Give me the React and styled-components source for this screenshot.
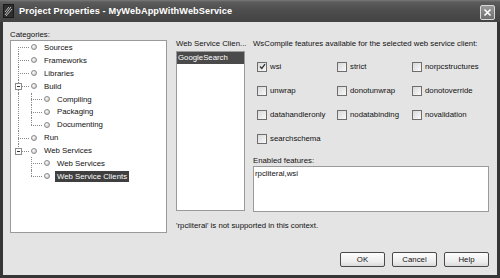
import React from 'react';
import styled, { createGlobalStyle } from 'styled-components';

const GlobalStyle = createGlobalStyle`
    html, body {
        margin: 0;
        padding: 0;
        background: #3a3a3a;
    }
    #root {
        width: 500px;
        height: 278px;
    }
`;

const Window = styled.div`
    width: 500px;
    height: 278px;
    display: flex;
    flex-direction: column;
    background: #363636;
    font-family: 'Liberation Sans', Arial, sans-serif;
    font-size: 7.8px;
    color: #111;
    overflow: hidden;
`;

const TitleBar = styled.div`
    height: 22px;
    flex: none;
    display: flex;
    align-items: center;
    padding: 0 5px 0 3px;
    background: linear-gradient(#7a7a7a 0, #5c5c5c 2px, #4e4e4e 45%, #434343 100%);
`;

const Title = styled.div`
    flex: 1;
    margin-left: 5px;
    color: #fff;
    font-weight: bold;
    font-size: 9.2px;
    letter-spacing: 0.1px;
`;

const CloseButton = styled.div`
    width: 13px;
    height: 13px;
    border: 1px solid #d8d8d8;
    border-radius: 2px;
    background: linear-gradient(#9a9a9a, #6e6e6e);
    display: flex;
    align-items: center;
    justify-content: center;
    margin-top: 3px;
`;

const Body = styled.div`
    flex: 1;
    margin: 0 3px 3px 3px;
    background: #e4e4e4;
    padding: 7px 8px 8px 7px;
    display: flex;
    flex-direction: column;
`;

const Main = styled.div`
    height: 204px;
    display: flex;
`;

const LeftColumn = styled.div`
    width: 157px;
    display: flex;
    flex-direction: column;
`;

const Label = styled.div`
    line-height: 11px;
    height: 11px;
    margin-top: ${(p) => p.$gap || 0}px;
    white-space: nowrap;
`;

const TreeBox = styled.div`
    flex: 1;
    background: #fff;
    border: 1px solid #9a9a9a;
    padding: 0 0 0 1px;
`;

const Row = styled.div`
    height: 12.9px;
    display: flex;
    align-items: center;
    white-space: nowrap;
`;

const Cell = styled.div`
    position: relative;
    width: 13px;
    height: 100%;
    flex: none;

    &::before {
        content: '';
        display: ${(p) => (p.$v === 'none' ? 'none' : 'block')};
        position: absolute;
        left: 6px;
        top: ${(p) => (p.$v === 'bottom' ? '50%' : '0')};
        bottom: ${(p) => (p.$v === 'top' ? '50%' : '0')};
        border-left: 1px dotted #8a8a8a;
    }

    &::after {
        content: '';
        display: ${(p) => (p.$h ? 'block' : 'none')};
        position: absolute;
        left: 6px;
        width: 11px;
        top: 50%;
        border-top: 1px dotted #8a8a8a;
    }
`;

const Expander = styled.div`
    position: absolute;
    left: 3px;
    top: 50%;
    margin-top: -3px;
    width: 5px;
    height: 5px;
    border: 1px solid #8a8a8a;
    background: #fff;
    z-index: 1;

    &::after {
        content: '';
        position: absolute;
        left: 1px;
        right: 1px;
        top: 2px;
        border-top: 1px solid #333;
    }
`;

const Bullet = styled.div`
    width: 4px;
    height: 4px;
    margin-left: 6px;
    border-radius: 50%;
    border: 1px solid #8a8a8a;
    background: radial-gradient(circle at 35% 35%, #fff, #bbb);
    flex: none;
    position: relative;
    z-index: 1;
`;

const NodeText = styled.span`
    margin-left: ${(p) => (p.$selected ? 5 : 7)}px;
    padding: 0 ${(p) => (p.$selected ? 2 : 0)}px;
    line-height: 11px;
    background: ${(p) => (p.$selected ? '#3f3f3f' : 'transparent')};
    color: ${(p) => (p.$selected ? '#fff' : '#111')};
`;

const RightPanel = styled.div`
    flex: 1;
    margin-left: 9px;
    padding-top: 9px;
    display: flex;
    flex-direction: column;
`;

const Columns = styled.div`
    display: flex;
    gap: 8px;
`;

const ClientColumn = styled.div`
    width: 69px;
    display: flex;
    flex-direction: column;
`;

const ListBox = styled.div`
    height: 158px;
    margin-top: 2px;
    background: #fff;
    border: 1px solid #9a9a9a;
`;

const ListItem = styled.div`
    height: 12px;
    line-height: 12px;
    padding-left: 1px;
    background: ${(p) => (p.$selected ? '#4a4a4a' : 'transparent')};
    color: ${(p) => (p.$selected ? '#fff' : '#111')};
`;

const FeatureColumn = styled.div`
    flex: 1;
    display: flex;
    flex-direction: column;
`;

const CheckGrid = styled.div`
    margin-top: 13px;
    padding-left: 4px;
    display: grid;
    grid-template-columns: 80px 75px 1fr;
    row-gap: 15px;
`;

const CheckItem = styled.label`
    display: flex;
    align-items: center;
    height: 9px;
    white-space: nowrap;
`;

const Box = styled.span`
    width: 8px;
    height: 8px;
    border: 1px solid #6e6e6e;
    background: linear-gradient(135deg, #d8d8d8, #fafafa);
    display: flex;
    align-items: center;
    justify-content: center;
    margin-right: 3px;
    flex: none;
`;

const TextArea = styled.div`
    height: 43px;
    background: #fff;
    border: 1px solid #9a9a9a;
    padding: 1px 0 0 1px;
    line-height: 11px;
`;

const Note = styled.div`
    margin-top: 8px;
    line-height: 11px;
    white-space: nowrap;
`;

const ButtonRow = styled.div`
    margin-top: 19px;
    display: flex;
    justify-content: flex-end;
    gap: 7px;
`;

const Button = styled.div`
    width: 43px;
    height: 13px;
    border: 1px solid #4a4a4a;
    border-radius: 2px;
    background: linear-gradient(#fdfdfd, #ececec 70%, #d9d9d9);
    display: flex;
    align-items: center;
    justify-content: center;
`;

const tree = [
    { label: 'Sources', level: 0, lines: ['bottom'] },
    { label: 'Frameworks', level: 0, lines: ['full'] },
    { label: 'Libraries', level: 0, lines: ['full'] },
    { label: 'Build', level: 0, lines: ['full'], expander: true },
    { label: 'Compiling', level: 1, lines: ['full', 'full'] },
    { label: 'Packaging', level: 1, lines: ['full', 'full'] },
    { label: 'Documenting', level: 1, lines: ['full', 'top'] },
    { label: 'Run', level: 0, lines: ['full'] },
    { label: 'Web Services', level: 0, lines: ['top'], expander: true },
    { label: 'Web Services', level: 1, lines: ['none', 'full'] },
    { label: 'Web Service Clients', level: 1, lines: ['none', 'top'], selected: true },
];

const features = [
    ['wsi', true],
    ['strict'],
    ['norpcstructures'],
    ['unwrap'],
    ['donotunwrap'],
    ['donotoverride'],
    ['datahandleronly'],
    ['nodatabinding'],
    ['novalidation'],
    ['searchschema'],
];

const AppIcon = () => (
    <svg width="11" height="14" viewBox="0 0 11 14">
        <rect x="0.5" y="0.5" width="10" height="13" fill="#2e2e2e" stroke="#1a1a1a" />
        <path d="M2 11 L8 3 M3 12 L9 5 M2 8 L6 3" stroke="#bdbdbd" strokeWidth="1" />
    </svg>
);

const Check = () => (
    <svg width="7" height="7" viewBox="0 0 7 7">
        <path d="M1 3.5 L2.8 5.5 L6 1.2" fill="none" stroke="#333" strokeWidth="1.3" />
    </svg>
);

const TreeNode = ({ node }) => (
    <Row>
        {node.lines.map((v, i) => (
            <Cell key={i} $v={v} $h={i === node.level}>
                {i === node.level && node.expander && <Expander />}
            </Cell>
        ))}
        <Bullet />
        <NodeText $selected={node.selected}>{node.label}</NodeText>
    </Row>
);

const App = () => {
    return (
        <Window>
            <GlobalStyle />
            <TitleBar>
                <AppIcon />
                <Title>Project Properties - MyWebAppWithWebService</Title>
                <CloseButton>
                    <svg width="9" height="9" viewBox="0 0 9 9">
                        <path d="M1.5 1.5 L7.5 7.5 M7.5 1.5 L1.5 7.5" stroke="#fff" strokeWidth="1.6" />
                    </svg>
                </CloseButton>
            </TitleBar>
            <Body>
                <Main>
                    <LeftColumn>
                        <Label>Categories:</Label>
                        <TreeBox>
                            {tree.map((node, i) => (
                                <TreeNode key={i} node={node} />
                            ))}
                        </TreeBox>
                    </LeftColumn>
                    <RightPanel>
                        <Columns>
                            <ClientColumn>
                                <Label>Web Service Clien...</Label>
                                <ListBox>
                                    <ListItem $selected>GoogleSearch</ListItem>
                                </ListBox>
                            </ClientColumn>
                            <FeatureColumn>
                                <Label>WsCompile features available for the selected web service client:</Label>
                                <CheckGrid>
                                    {features.map(([name, checked]) => (
                                        <CheckItem key={name}>
                                            <Box>{checked && <Check />}</Box>
                                            {name}
                                        </CheckItem>
                                    ))}
                                </CheckGrid>
                                <Label $gap={12}>Enabled features:</Label>
                                <TextArea>rpcliteral,wsi</TextArea>
                            </FeatureColumn>
                        </Columns>
                        <Note>'rpcliteral' is not supported in this context.</Note>
                    </RightPanel>
                </Main>
                <ButtonRow>
                    <Button>OK</Button>
                    <Button>Cancel</Button>
                    <Button>Help</Button>
                </ButtonRow>
            </Body>
        </Window>
    );
};

export default App;
